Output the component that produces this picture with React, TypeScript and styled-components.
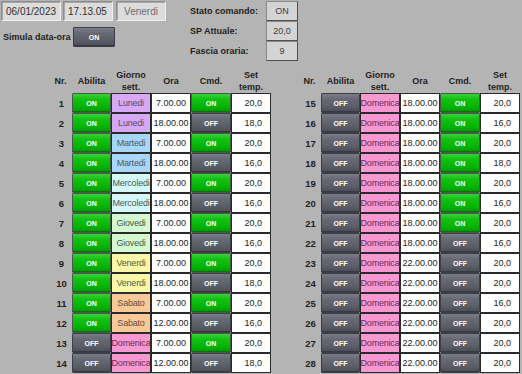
import React from "react";
import styled, { createGlobalStyle } from "styled-components";

const Global = createGlobalStyle`
  html, body { margin: 0; padding: 0; background: #b4b4b4; }
  body { font-family: "Liberation Sans", Arial, sans-serif; color: #222; width: 522px; height: 374px; overflow: hidden; }
`;

const Page = styled.div`
  width: 522px;
  height: 374px;
  display: flex;
  flex-direction: column;
`;

const Top = styled.div`
  display: flex;
  height: 70px;
  padding: 1px 0 0 1px;
  box-sizing: border-box;
`;

const TopLeft = styled.div`
  display: flex;
  flex-direction: column;
  gap: 6px;
  width: 189px;
`;

const FieldRow = styled.div`
  display: flex;
  gap: 2px;
`;

const Field = styled.div<{ $w: number; $muted?: boolean }>`
  width: ${(p) => p.$w}px;
  height: 20px;
  box-sizing: border-box;
  background: #dcdcdc;
  border: 1px solid #8c8c8c;
  border-right-color: #f0f0f0;
  border-bottom-color: #f0f0f0;
  box-shadow: inset 1px 1px 0 #a8a8a8;
  display: flex;
  align-items: center;
  padding-left: ${(p) => (p.$muted ? 0 : 4)}px;
  justify-content: ${(p) => (p.$muted ? "center" : "flex-start")};
  font-size: 10px;
  color: ${(p) => (p.$muted ? "#6e6e6e" : "#303030")};
  margin-left: ${(p) => (p.$muted ? 1 : 0)}px;
`;

const SimRow = styled.div`
  display: flex;
  align-items: center;
`;

const BoldLabel = styled.div`
  font-size: 9px;
  font-weight: bold;
  color: #1e1e1e;
`;

const SimLabel = styled(BoldLabel)`
  width: 70px;
  padding-left: 2px;
`;

const LabelCol = styled.div`
  display: flex;
  flex-direction: column;
  width: 76px;
`;

const LabelCell = styled(BoldLabel)`
  height: 20px;
  display: flex;
  align-items: center;
`;

const ValueCol = styled.div`
  display: flex;
  flex-direction: column;
`;

const ValueBox = styled.div`
  width: 32px;
  height: 20px;
  box-sizing: border-box;
  background: #d4d4d4;
  border: 1px solid #505050;
  border-top-color: #8a8a8a;
  border-left-color: #8a8a8a;
  display: flex;
  align-items: center;
  justify-content: center;
  font-size: 9px;
  color: #404040;
`;

const Tables = styled.div`
  display: flex;
  gap: 27px;
  padding-left: 49px;
`;

const Table = styled.div`
  display: grid;
  grid-template-columns: 23px 39px 40px 40px 40px 40px;
  grid-auto-rows: 20px;
  grid-template-rows: 23px;
`;

const Head = styled.div`
  font-size: 9px;
  font-weight: bold;
  color: #1e1e1e;
  text-align: center;
  line-height: 12px;
  display: flex;
  align-items: center;
  justify-content: center;
  padding-bottom: 1px;
`;

const Num = styled.div`
  font-size: 9.5px;
  font-weight: bold;
  color: #222;
  display: flex;
  align-items: center;
  justify-content: center;
  padding-left: 2px;
`;

const Btn = styled.div<{ $on: boolean; $w?: number }>`
  box-sizing: border-box;
  height: 20px;
  width: ${(p) => p.$w ?? 39}px;
  border: 1px solid ${(p) => (p.$on ? "#4a5a4a" : "#3c3e46")};
  border-radius: 1px;
  background: ${(p) =>
    p.$on
      ? "linear-gradient(#3ad23a 0%, #12c012 30%, #04b404 70%, #0a960a 100%)"
      : "linear-gradient(#7a7c88 0%, #666873 30%, #5a5c66 70%, #4a4c55 100%)"};
  box-shadow: inset 0 -1px 0 rgba(0,0,0,0.25);
  color: #fff;
  font-size: 7px;
  font-weight: bold;
  display: flex;
  align-items: center;
  justify-content: center;
`;

const Day = styled.div<{ $bg: string; $fg: string }>`
  box-sizing: border-box;
  border: 1px solid #2a2a2a;
  background: ${(p) => p.$bg};
  color: ${(p) => p.$fg};
  font-size: 9px;
  display: flex;
  align-items: center;
  justify-content: center;
  white-space: nowrap;
  letter-spacing: -0.2px;
`;

const Cell = styled.div<{ $right?: boolean }>`
  box-sizing: border-box;
  border: 1px solid #2a2a2a;
  background: #fff;
  color: #222;
  font-size: 9px;
  display: flex;
  align-items: center;
  justify-content: ${(p) => (p.$right ? "flex-end" : "center")};
  padding-right: ${(p) => (p.$right ? 8 : 0)}px;
  white-space: nowrap;
`;

const dayColors: Record<string, [string, string]> = {
  Lunedi: ["#d6a8f6", "#5a4a66"],
  Martedi: ["#a8d6f8", "#4a5a66"],
  Mercoledi: ["#d4f8f8", "#4a5a5a"],
  Giovedi: ["#d4f8d0", "#4a5a4a"],
  Venerdi: ["#f8f8a8", "#5a5a3a"],
  Sabato: ["#f8c898", "#66503a"],
  Domenica: ["#f898d0", "#6a2a5a"],
};

type Row = [number, boolean, string, string, boolean, string];

const left: Row[] = [
  [1, true, "Lunedi", "7.00.00", true, "20,0"],
  [2, true, "Lunedi", "18.00.00", false, "18,0"],
  [3, true, "Martedi", "7.00.00", true, "20,0"],
  [4, true, "Martedi", "18.00.00", false, "16,0"],
  [5, true, "Mercoledi", "7.00.00", true, "20,0"],
  [6, true, "Mercoledi", "18.00.00", false, "16,0"],
  [7, true, "Giovedi", "7.00.00", true, "20,0"],
  [8, true, "Giovedi", "18.00.00", false, "16,0"],
  [9, true, "Venerdi", "7.00.00", true, "20,0"],
  [10, true, "Venerdi", "18.00.00", false, "18,0"],
  [11, true, "Sabato", "7.00.00", true, "20,0"],
  [12, true, "Sabato", "12.00.00", false, "16,0"],
  [13, false, "Domenica", "7.00.00", true, "20,0"],
  [14, false, "Domenica", "12.00.00", false, "18,0"],
];

const right: Row[] = [
  [15, false, "Domenica", "18.00.00", true, "20,0"],
  [16, false, "Domenica", "18.00.00", true, "16,0"],
  [17, false, "Domenica", "18.00.00", true, "20,0"],
  [18, false, "Domenica", "18.00.00", true, "18,0"],
  [19, false, "Domenica", "18.00.00", true, "20,0"],
  [20, false, "Domenica", "18.00.00", true, "16,0"],
  [21, false, "Domenica", "18.00.00", true, "20,0"],
  [22, false, "Domenica", "18.00.00", false, "16,0"],
  [23, false, "Domenica", "22.00.00", false, "20,0"],
  [24, false, "Domenica", "22.00.00", false, "20,0"],
  [25, false, "Domenica", "22.00.00", false, "16,0"],
  [26, false, "Domenica", "22.00.00", false, "20,0"],
  [27, false, "Domenica", "22.00.00", false, "20,0"],
  [28, false, "Domenica", "22.00.00", false, "20,0"],
];

function Schedule({ rows }: { rows: Row[] }) {
  return (
    <Table>
      <Head>Nr.</Head>
      <Head>Abilita</Head>
      <Head>Giorno<br />sett.</Head>
      <Head>Ora</Head>
      <Head>Cmd.</Head>
      <Head>Set<br />temp.</Head>
      {rows.map(([n, en, day, time, cmd, set]) => {
        const [bg, fg] = dayColors[day];
        return (
          <React.Fragment key={n}>
            <Num>{n}</Num>
            <Btn $on={en}>{en ? "ON" : "OFF"}</Btn>
            <Day $bg={bg} $fg={fg}>{day}</Day>
            <Cell>{time}</Cell>
            <Btn $on={cmd} $w={40}>{cmd ? "ON" : "OFF"}</Btn>
            <Cell $right>{set}</Cell>
          </React.Fragment>
        );
      })}
    </Table>
  );
}

export default function App() {
  return (
    <Page>
      <Global />
      <Top>
        <TopLeft>
          <FieldRow>
            <Field $w={60}>06/01/2023</Field>
            <Field $w={50}>17.13.05</Field>
            <Field $w={50} $muted>Venerdi</Field>
          </FieldRow>
          <SimRow>
            <SimLabel>Simula data-ora</SimLabel>
            <Btn $on={false} $w={42}>ON</Btn>
          </SimRow>
        </TopLeft>
        <LabelCol>
          <LabelCell>Stato comando:</LabelCell>
          <LabelCell>SP Attuale:</LabelCell>
          <LabelCell>Fascia oraria:</LabelCell>
        </LabelCol>
        <ValueCol>
          <ValueBox>ON</ValueBox>
          <ValueBox>20,0</ValueBox>
          <ValueBox>9</ValueBox>
        </ValueCol>
      </Top>
      <Tables>
        <Schedule rows={left} />
        <Schedule rows={right} />
      </Tables>
    </Page>
  );
}
